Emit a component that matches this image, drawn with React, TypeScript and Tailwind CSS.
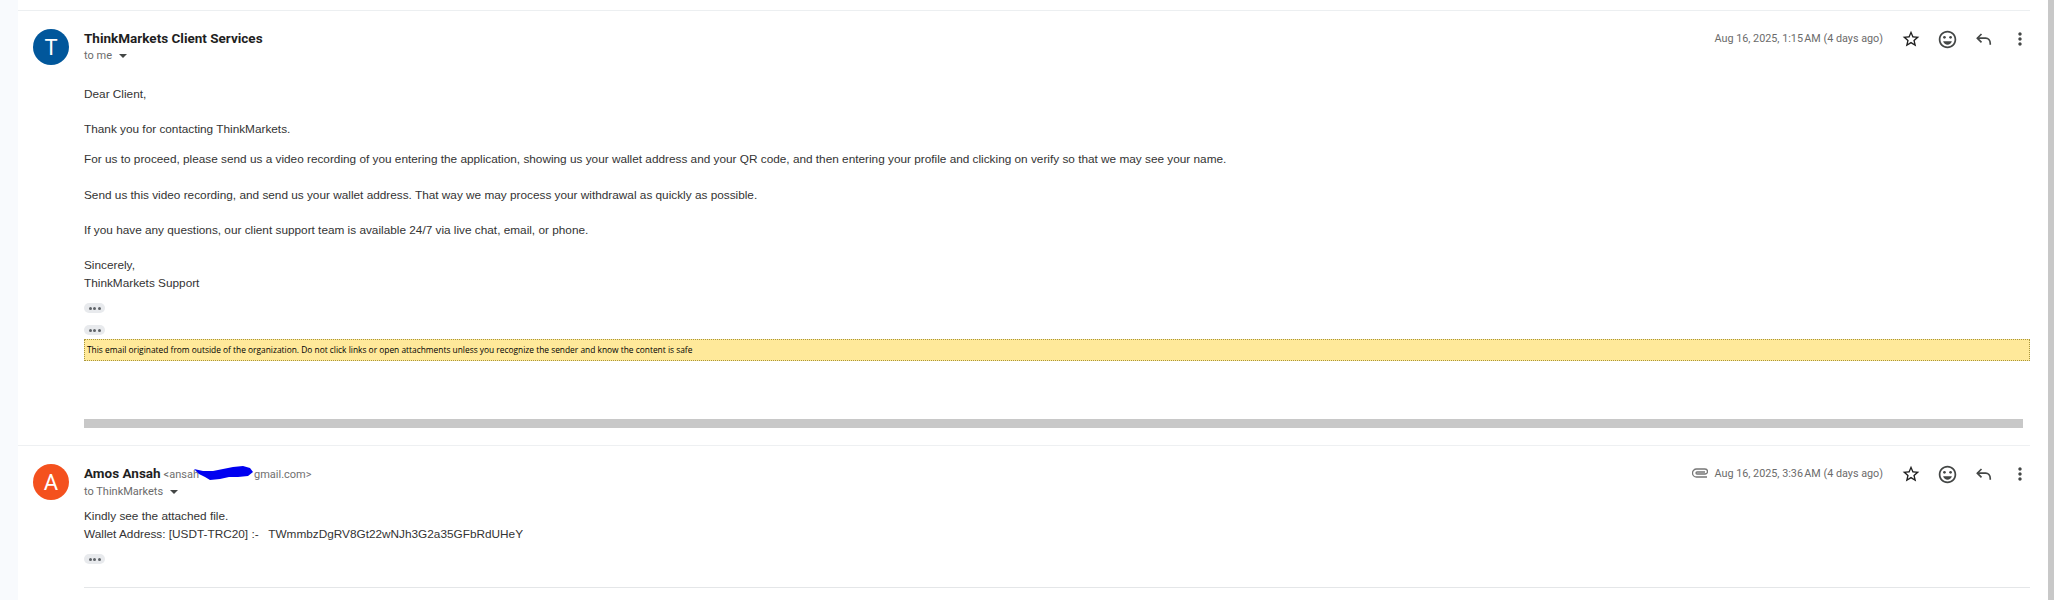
import React from "react";
import { MdOutlineEmojiEmotions, MdMoreVert, MdStarBorder } from "react-icons/md";

const ReplyIcon = () => (
    <svg width="20" height="20" viewBox="0 0 24 24" fill="none" stroke="#444746" strokeWidth="2">
        <path d="M9 6 4 11l5 5" />
        <path d="M4 11h10c3 0 5.5 2.5 5.5 6.5V19" />
    </svg>
);

const MessageActions = () => (
    <div className="flex items-center text-[#444746]">
        <div className="w-[36px] flex justify-center ml-[10px]">
            <MdStarBorder size={20} className="text-[#1f1f1f]" />
        </div>
        <div className="w-[37px] flex justify-center">
            <MdOutlineEmojiEmotions size={21} />
        </div>
        <div className="w-[36px] flex justify-center mr-[8px]">
            <ReplyIcon />
        </div>
        <div className="w-[20px] flex justify-center">
            <MdMoreVert size={20} />
        </div>
    </div>
);

const Ellipsis = ({ className = "" }: { className?: string }) => (
    <div className={`w-[21px] h-[10px] rounded-full bg-[#e8eaed] flex items-center justify-center gap-[1.5px] ${className}`}>
        <span className="w-[3px] h-[3px] rounded-full bg-[#5f6368]" />
        <span className="w-[3px] h-[3px] rounded-full bg-[#5f6368]" />
        <span className="w-[3px] h-[3px] rounded-full bg-[#5f6368]" />
    </div>
);

const Caret = () => <span className="inline-block ml-[7px] mb-[1px] border-x-[4px] border-t-[4px] border-x-transparent border-t-[#444746]" />;

const Avatar = ({ letter, color }: { letter: string; color: string }) => (
    <div className={`w-[36px] h-[36px] shrink-0 rounded-full flex items-center justify-center text-white text-[22px] font-['Roboto',sans-serif] ${color}`}>
        {letter}
    </div>
);

export default function App() {
    return (
        <div className="flex h-[600px] w-[2054px] overflow-hidden bg-white text-[11.8px] text-[#333333] font-['Liberation_Sans',Arial,sans-serif]">
            <div className="w-[18px] shrink-0 bg-[#f8fafd]" />
            <div className="flex-1 min-w-0 pr-[18px]">
                <div className="h-[11px] border-b border-[#eceff1]" />

                {/* Primer mensaje */}
                <div className="flex h-[435px] pl-[15px] pt-[18px] border-b border-[#eef0f2]">
                    <Avatar letter="T" color="bg-[#01579b]" />
                    <div className="flex-1 min-w-0 pl-[15px]">
                        <div className="flex justify-between h-[36px]">
                            <div>
                                <div className="h-[18px] leading-[18px] text-[13.5px] font-bold text-[#1f1f1f] font-['Roboto',sans-serif]">ThinkMarkets Client Services</div>
                                <div className="h-[18px] leading-[18px] text-[11px] text-[#6b6b6b] font-['Roboto',sans-serif]">
                                    to me
                                    <Caret />
                                </div>
                            </div>
                            <div className="flex items-center h-[20px]">
                                <span className="text-[10.8px] text-[#6b6b6b] font-['Roboto',sans-serif]">Aug 16, 2025, 1:15&#8239;AM (4 days ago)</span>
                                <MessageActions />
                            </div>
                        </div>
                        <div className="leading-[18px]">
                            <p className="mt-[20px]">Dear Client,</p>
                            <p className="mt-[17px]">Thank you for contacting ThinkMarkets.</p>
                            <p className="mt-[12px]">For us to proceed, please send us a video recording of you entering the application, showing us your wallet address and your QR code, and then entering your profile and clicking on verify so that we may see your name.</p>
                            <p className="mt-[18px]">Send us this video recording, and send us your wallet address. That way we may process your withdrawal as quickly as possible.</p>
                            <p className="mt-[17px]">If you have any questions, our client support team is available 24/7 via live chat, email, or phone.</p>
                            <p className="mt-[17px]">Sincerely,</p>
                            <p>ThinkMarkets Support</p>
                        </div>
                        <Ellipsis className="mt-[11px]" />
                        <Ellipsis className="mt-[12px]" />
                        <div className="mt-[4px] h-[22px] pl-[2px] flex items-center border border-dotted border-[#a8963c] bg-[#ffe99a] text-[8.4px] text-black font-['Open_Sans',sans-serif]">
                            This email originated from outside of the organization. Do not click links or open attachments unless you recognize the sender and know the content is safe
                        </div>
                        <div className="mt-[58px] mr-[7px] h-[9px] bg-[#c8c8c8]" />
                    </div>
                </div>

                {/* Segundo mensaje */}
                <div className="flex pl-[15px] pt-[18px]">
                    <Avatar letter="A" color="bg-[#f4511e]" />
                    <div className="flex-1 min-w-0 pl-[15px]">
                        <div className="flex justify-between h-[36px]">
                            <div>
                                <div className="relative h-[19px] leading-[18px] whitespace-nowrap font-['Roboto',sans-serif]">
                                    <span className="text-[13.5px] font-bold text-[#1f1f1f]">Amos Ansah</span>
                                    <span className="ml-[3px] text-[11px] text-[#6f6f6f]">&lt;ansah<span className="inline-block w-[55px]" />gmail.com&gt;</span>
                                    <svg className="absolute left-[109px] top-[2px]" width="61" height="15" viewBox="0 0 61 15">
                                        <path d="M1 3 10 5 20 5 30 3 40 1 50 0 57 2 60 6 55 10 45 11 36 11 27 13 17 14 12 11 6 8Z" fill="#0000f0" />
                                    </svg>
                                </div>
                                <div className="h-[18px] leading-[18px] text-[11px] text-[#6b6b6b] font-['Roboto',sans-serif]">
                                    to ThinkMarkets
                                    <Caret />
                                </div>
                            </div>
                            <div className="flex items-center h-[20px]">
                                <svg className="mr-[6px] mb-[3px]" width="16" height="10" viewBox="0 0 16 10" fill="none" stroke="#777777" strokeWidth="1.3">
                                    <path d="M15 9H4.5a4 4 0 0 1 0-8H13a2 2 0 0 1 0 5H5a1 1 0 0 1 0-2h8" />
                                </svg>
                                <span className="text-[10.8px] text-[#6b6b6b] font-['Roboto',sans-serif]">Aug 16, 2025, 3:36&#8239;AM (4 days ago)</span>
                                <MessageActions />
                            </div>
                        </div>
                        <div className="leading-[18px] mt-[7px]">
                            <p>Kindly see the attached file.</p>
                            <p className="whitespace-pre">Wallet Address: [USDT-TRC20] :-   TWmmbzDgRV8Gt22wNJh3G2a35GFbRdUHeY</p>
                        </div>
                        <Ellipsis className="mt-[11px]" />
                        <div className="mt-[23px] h-px bg-[#e4e6e8]" />
                    </div>
                </div>
            </div>
            <div className="w-[6px] shrink-0 bg-[#c8c8c8]" />
        </div>
    );
}
